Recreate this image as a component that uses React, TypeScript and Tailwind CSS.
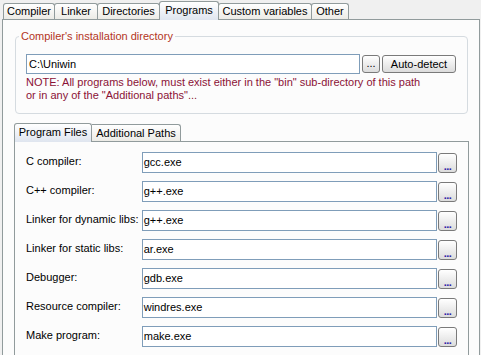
import React from "react";

const topTabs = [
  { label: "Compiler", w: "w-[52px]" },
  { label: "Linker", w: "w-[44px]" },
  { label: "Directories", w: "w-[63px]" },
  { label: "Programs", w: "w-[60px]", active: true },
  { label: "Custom variables", w: "w-[94px]" },
  { label: "Other", w: "w-[38px]" },
];

const programs = [
  { label: "C compiler:", value: "gcc.exe" },
  { label: "C++ compiler:", value: "g++.exe" },
  { label: "Linker for dynamic libs:", value: "g++.exe" },
  { label: "Linker for static libs:", value: "ar.exe" },
  { label: "Debugger:", value: "gdb.exe" },
  { label: "Resource compiler:", value: "windres.exe" },
  { label: "Make program:", value: "make.exe" },
];

function Tab({ label, w, active }: { label: string; w: string; active?: boolean }) {
  if (active) {
    return (
      <div
        className={`${w} h-[19px] -mb-px -ml-px relative z-10 flex items-start justify-center pt-[2px] border border-b-0 border-[#919b9c] rounded-t-[3px] bg-gradient-to-b from-[#ffffff] to-[#dfe5ef] text-black`}
      >
        {label}
      </div>
    );
  }
  return (
    <div
      className={`${w} h-[16px] flex items-start justify-center pt-[1px] border border-b-0 border-[#919b9c] rounded-t-[3px] bg-gradient-to-b from-[#ffffff] to-[#ecebe6] text-black -ml-px first:ml-0`}
    >
      {label}
    </div>
  );
}

function DotsButton() {
  return (
    <button className="w-[19px] h-[20px] border border-[#7a7a7a] rounded-[3px] bg-gradient-to-b from-[#ffffff] to-[#dcdcdc] flex items-end justify-center pb-[2px] text-[#2e23a8] text-[11px] font-bold leading-[8px] tracking-[-0.5px]">
      ...
    </button>
  );
}

export default function App() {
  return (
    <div
      className="w-[481px] h-[355px] overflow-hidden bg-[#f0f0f0] text-[11px] leading-[13px] text-black"
      style={{ fontFamily: '"Liberation Sans", Arial, sans-serif' }}
    >
      {/* top tabs */}
      <div className="flex items-end h-[19px] pl-[3px] pt-[1px]">
        {topTabs.map((t) => (
          <Tab key={t.label} {...t} />
        ))}
      </div>

      <div className="ml-[2px] w-[478px] h-[400px] border border-[#919b9c] bg-[#fcfcfc] pt-[10px]">
        {/* installation directory group */}
        <fieldset className="ml-[12px] w-[453px] border border-[#d5dbe0] rounded-[4px] pl-[10px] pr-[10px] pb-[11px] pt-[11px]">
          <legend className="-ml-[7px] px-[2px] text-[#b3351c]">Compiler's installation directory</legend>
          <div className="flex items-center gap-[2px]">
            <div className="w-[334px] h-[20px] border border-[#7f9db9] bg-white pl-[2px] flex items-center">
              C:\Uniwin
            </div>
            <button className="w-[18px] h-[18px] border border-[#7a7a7a] rounded-[3px] bg-gradient-to-b from-[#ffffff] to-[#dcdcdc] flex items-center justify-center pb-[2px]">
              ...
            </button>
            <button className="w-[74px] h-[18px] border border-[#7a7a7a] rounded-[3px] bg-gradient-to-b from-[#ffffff] to-[#dcdcdc] flex items-center justify-center">
              Auto-detect
            </button>
          </div>
          <p className="mt-[2px] text-[#8b1236]">
            NOTE: All programs below, must exist either in the "bin" sub-directory of this path
            <br />
            or in any of the "Additional paths"...
          </p>
        </fieldset>

        {/* inner tabs */}
        <div className="ml-[11px] mt-[8px] w-[455px]">
          <div className="flex items-end h-[19px]">
            <div className="w-[78px] h-[19px] -mb-px relative z-10 flex items-start justify-center pt-[2px] border border-b-0 border-[#919b9c] rounded-t-[3px] bg-gradient-to-b from-[#ffffff] to-[#dfe5ef]">
              Program Files
            </div>
            <div className="w-[89px] h-[17px] flex items-start justify-center pt-[2px] border border-b-0 border-l-0 border-[#919b9c] rounded-tr-[3px] bg-gradient-to-b from-[#ffffff] to-[#ecebe6]">
              Additional Paths
            </div>
          </div>
          <div className="h-[220px] border border-[#919b9c] bg-[#fcfcfc] pl-[11px] pr-[11px] pt-[10px] flex flex-col gap-[8px]">
            {programs.map((p) => (
              <div key={p.label} className="flex items-start">
                <div className="w-[116px] pt-[3px]">{p.label}</div>
                <div className="w-[296px] h-[21px] border border-[#7f9db9] bg-white pl-[1px] flex items-center">
                  {p.value}
                </div>
                <div className="ml-[1px] pt-[1px]">
                  <DotsButton />
                </div>
              </div>
            ))}
          </div>
        </div>
      </div>
    </div>
  );
}
